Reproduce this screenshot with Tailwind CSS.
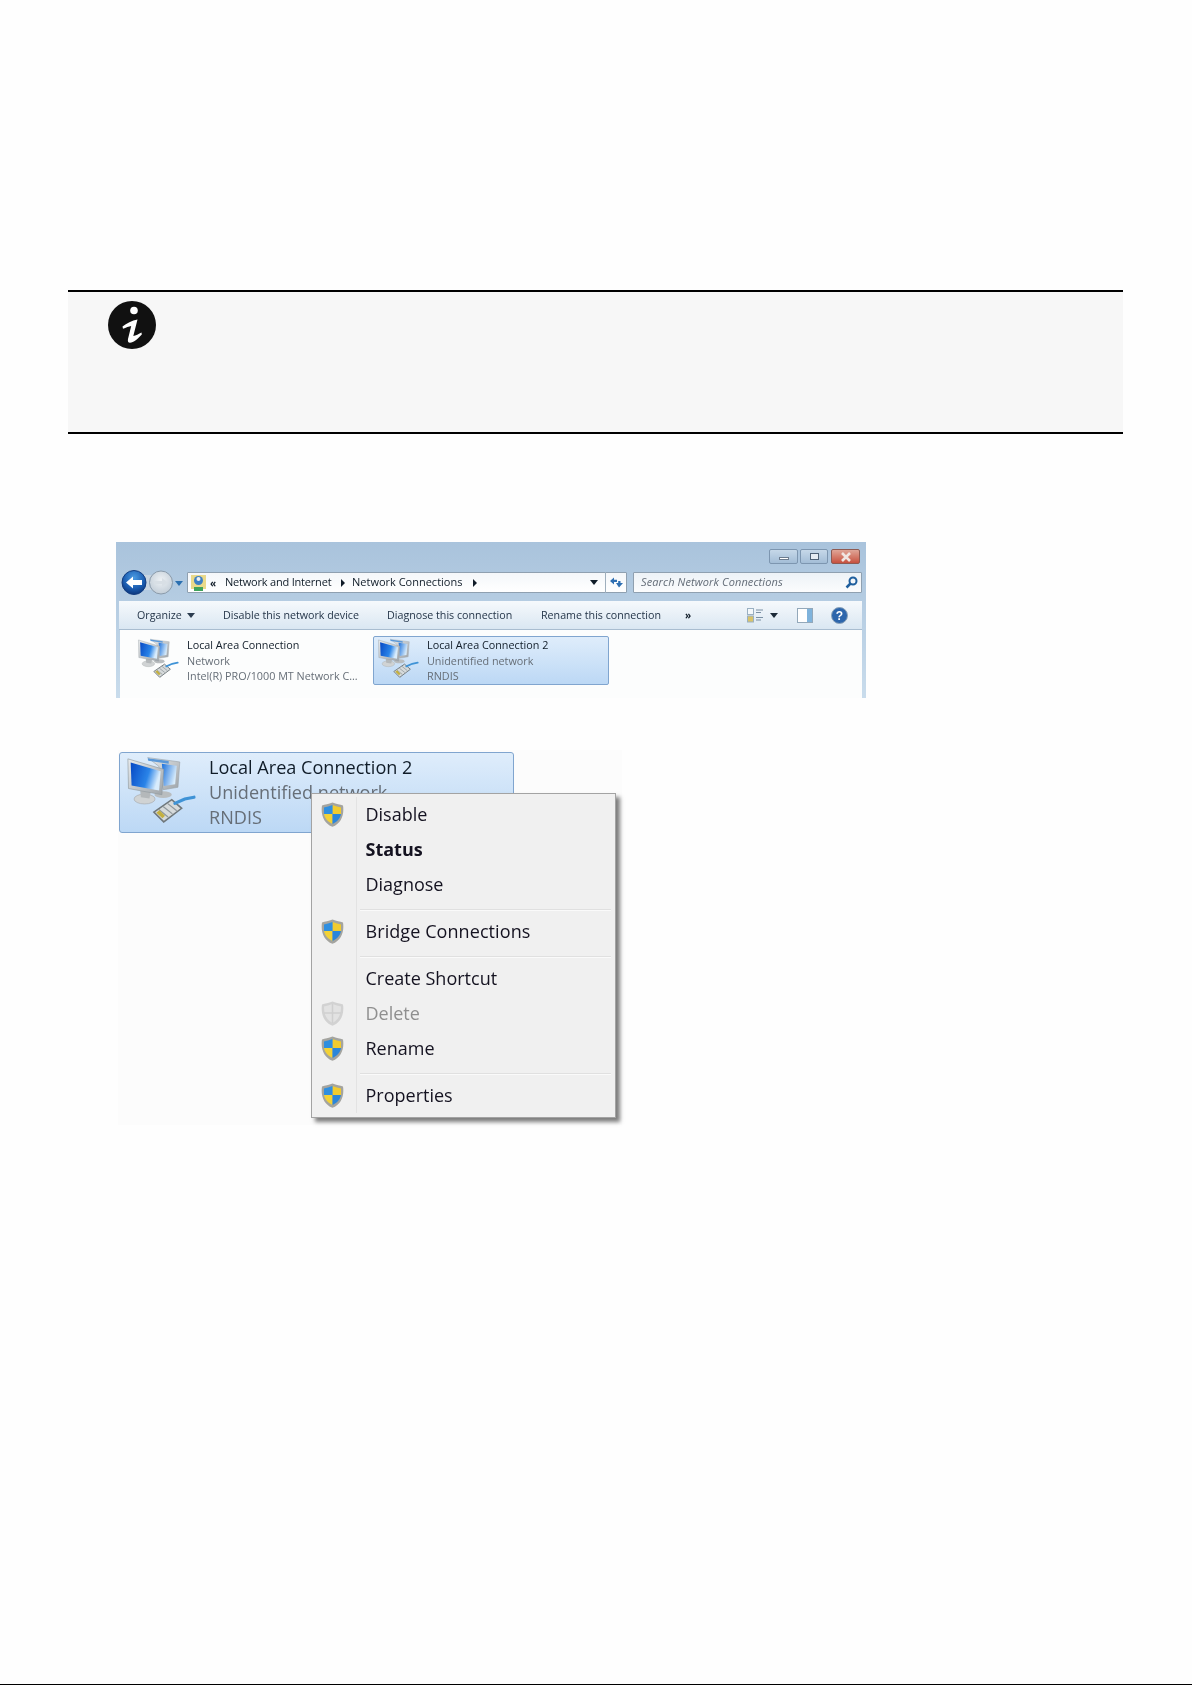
<!DOCTYPE html>
<html>
<head>
<meta charset="utf-8">
<script src="https://cdn.jsdelivr.net/npm/@tailwindcss/browser@4"></script>
</head>
<body class="bg-white">
<svg width="0" height="0" class="absolute">
  <defs>
    <linearGradient id="scr1" x1="0" y1="0" x2="1" y2="0.3"><stop offset="0" stop-color="#0648c4"/><stop offset="0.65" stop-color="#2a84e8"/><stop offset="1" stop-color="#d8ecfc"/></linearGradient>
    <linearGradient id="scr2" x1="0" y1="0" x2="1" y2="0.4"><stop offset="0" stop-color="#1a70dc"/><stop offset="1" stop-color="#d8ecfb"/></linearGradient>
    <linearGradient id="bez" x1="0" y1="0" x2="1" y2="1"><stop offset="0" stop-color="#e8ebed"/><stop offset="1" stop-color="#9ea4a9"/></linearGradient>
    <radialGradient id="backb" cx="0.5" cy="0.3" r="0.75"><stop offset="0" stop-color="#4b9be2"/><stop offset="0.6" stop-color="#1a5cb0"/><stop offset="1" stop-color="#0a2f72"/></radialGradient>
    <radialGradient id="fwdb" cx="0.5" cy="0.4" r="0.7"><stop offset="0" stop-color="#eef2f5"/><stop offset="1" stop-color="#bcc8d3"/></radialGradient>
    <symbol id="pc" viewBox="0 0 240 220">
      <ellipse cx="122" cy="122" rx="28" ry="11" fill="#b9bdbf"/>
      <path d="M72 2 L176 16 L170 98 L122 106 L108 30 Z" fill="url(#bez)" stroke="#9aa3a8" stroke-width="2"/>
      <path d="M118 22 L166 28 L161 88 L124 94 Z" fill="url(#scr2)"/>
      <path d="M72 4 L140 13 L140 22 L74 12 Z" fill="#5a98d8"/>
      <ellipse cx="62" cy="136" rx="34" ry="16" fill="#d0d3d4" stroke="#a4a8aa" stroke-width="2"/>
      <path d="M48 108 L82 112 L78 134 L50 130 Z" fill="#b4b8ba"/>
      <path d="M8 6 L124 40 L118 122 L10 102 Z" fill="url(#bez)" stroke="#8f989e" stroke-width="2"/>
      <path d="M17 18 L114 46 L109 108 L20 92 Z" fill="url(#scr1)"/>
      <path d="M92 178 L150 138 L182 166 L124 210 Z" fill="#d6dadb" stroke="#6f777b" stroke-width="5"/>
      <path d="M108 170 L138 194 M122 160 L152 184 M136 150 L166 174" stroke="#8f979b" stroke-width="4"/>
      <path d="M100 180 L120 198 L128 190 L110 172 Z" fill="#c4b040"/>
      <path d="M160 150 L192 136 L222 130" stroke="#3f93d6" stroke-width="10" fill="none" stroke-linecap="round"/>
    </symbol>
    <symbol id="shield" viewBox="0 0 23 25">
      <path d="M11.5 0.5 C15.5 2 19 2.5 22 3.5 C23.500 13 20 21.500 11.5 24.800 C3 21.500 -0.5 13 1 3.500 C4 2.500 7.500 2 11.5 0.5 Z" fill="#a4a49f"/>
      <path d="M11.5 3 C14.5 4.200 17.5 4.800 20 5.400 L20 12 L11.5 12 Z" fill="#f1cb2e"/>
      <path d="M11.5 3 C8.500 4.200 5.500 4.800 3 5.400 L3 12 L11.5 12 Z" fill="#2f8fe0"/>
      <path d="M3 12 L11.5 12 L11.5 22 C6.500 19.700 4 16.500 3 12 Z" fill="#f3d236"/>
      <path d="M20 12 L11.5 12 L11.5 22 C16.500 19.700 19 16.500 20 12 Z" fill="#2b86da"/>
    </symbol>
    <symbol id="shieldoff" viewBox="0 0 23 25">
      <path d="M11.5 0.5 C15.5 2 19 2.5 22 3.5 C23.500 13 20 21.500 11.5 24.800 C3 21.500 -0.5 13 1 3.500 C4 2.500 7.500 2 11.5 0.5 Z" fill="#d2d2d2"/>
      <path d="M11.5 3 C14.500 4.200 17.500 4.800 20 5.400 C20 13 18 18.500 11.5 22 C5 18.500 3 13 3 5.400 C5.500 4.800 8.500 4.200 11.5 3 Z" fill="#e2e2e2"/>
      <path d="M11.5 3 L11.5 22 M3 12 L20 12" stroke="#cfcfcf" stroke-width="1.500"/>
    </symbol>
  </defs>
</svg>

<div class="relative flex flex-col w-[1192px] h-[1685px] bg-[#fefefe] overflow-hidden font-['Open_Sans','Noto_Sans',sans-serif]">

  <!-- Note -->
  <div class="mt-[290px] ml-[68px] w-[1055px] h-[144px] bg-[#f7f7f7] border-y-[2px] border-black pl-[40px] pt-[9px] shrink-0">
    <svg width="48" height="48" viewBox="0 0 48 48">
      <circle cx="24" cy="24" r="24" fill="#111111"/>
      <circle cx="26" cy="9.500" r="3.800" fill="#ffffff"/>
      <path d="M14.500 25.500 C18.500 22.500 24 19.500 29.500 18.500 L25.300 35 C27.500 34.500 31 33 33.500 31.500 L33.800 33.500 C30 37.500 25.500 41.800 22 41.800 C20 41.800 19.600 40 20 38 L23.200 25 C21 25.500 18 26.500 15 27.800 Z" fill="#ffffff"/>
    </svg>
  </div>

  <!-- Explorer window -->
  <div class="mt-[108px] ml-[116px] w-[750px] h-[156px] shrink-0 flex flex-col bg-gradient-to-b from-[#a9c3dc] to-[#c9dcec] blur-[0.7px]">
    <div class="h-[30px] flex justify-end items-start pt-[7px] pr-[6px] shrink-0">
      <div class="w-[29px] h-[15px] rounded-[2px] border border-[#7d96b0] bg-gradient-to-b from-[#c6d8e9] to-[#a3bdd6] flex items-center justify-center"><div class="w-[10px] h-[3px] mt-[4px] bg-white border border-[#6b7b8e]"></div></div>
      <div class="w-[28px] h-[15px] ml-[2px] rounded-[2px] border border-[#7d96b0] bg-gradient-to-b from-[#c6d8e9] to-[#a3bdd6] flex items-center justify-center"><div class="w-[9px] h-[7px] border border-[#4f6277] bg-[#e6edf4]"></div></div>
      <div class="w-[29px] h-[15px] ml-[3px] rounded-[2px] border border-[#8e5a52] bg-gradient-to-b from-[#dfa597] to-[#c6503f] flex items-center justify-center">
        <svg width="12" height="10" viewBox="0 0 12 10"><path d="M2 1 L10 9 M10 1 L2 9" stroke="#f0e6e2" stroke-width="2.600"/></svg>
      </div>
    </div>

    <div class="h-[21px] flex shrink-0 text-[11px] text-[#101c28]">
      <svg class="w-[71px] h-[21px] shrink-0 overflow-visible" viewBox="0 0 71 21">
        <rect x="18" y="3" width="27" height="15" fill="#c9d5e0"/>
        <circle cx="18" cy="10.500" r="12" fill="url(#backb)" stroke="#123c80"/>
        <path d="M10 10.500 L17 4.500 L17 8 L26 8 L26 13 L17 13 L17 16.500 Z" fill="#ffffff"/>
        <circle cx="45" cy="10.500" r="11.500" fill="url(#fwdb)" stroke="#8a9bab"/>
        <path d="M52 10.500 L46 6 L46 9 L38 9 L38 12 L46 12 L46 15 Z" fill="#d8dfe5"/>
        <path d="M59 9 L67 9 L63 14 Z" fill="#2a6fb0"/>
      </svg>
      <div class="w-[440px] h-[21px] shrink-0 flex items-center bg-gradient-to-b from-[#f4f7fa] to-[#ffffff] border border-[#8fa0b0] rounded-[1px]">
        <svg class="ml-[2px] shrink-0" width="17" height="18" viewBox="0 0 17 18">
          <rect x="1" y="1" width="15" height="14" fill="#e9d98a"/>
          <circle cx="8.500" cy="6.500" r="4.500" fill="#3d7fc4"/>
          <circle cx="8.500" cy="5" r="2" fill="#f0f0f0"/>
          <rect x="4" y="13" width="9" height="4" fill="#3fa35c"/>
        </svg>
        <span class="ml-[3px] w-[15px] shrink-0 font-bold text-[10px] leading-none">«</span>
        <span class="w-[115px] shrink-0 whitespace-nowrap tracking-[-0.2px]">Network and Internet</span>
        <svg class="shrink-0" width="12" height="8" viewBox="0 0 12 8"><path d="M1 0 L5 4 L1 8 Z" fill="#101c28"/></svg>
        <span class="w-[120px] shrink-0 whitespace-nowrap">Network Connections</span>
        <svg class="shrink-0" width="10" height="8" viewBox="0 0 10 8"><path d="M1 0 L5 4 L1 8 Z" fill="#101c28"/></svg>
        <svg class="ml-[108px] shrink-0" width="8" height="5" viewBox="0 0 8 5"><path d="M0 0 L8 0 L4 5 Z" fill="#101c28"/></svg>
        <div class="ml-[7px] w-px h-[21px] bg-[#9fafbd] shrink-0"></div>
        <svg class="ml-[3px] shrink-0" width="15" height="13" viewBox="0 0 15 13">
          <path d="M1 5 L5 1.500 L5 3.800 L8 3.800 L8 6 L5 6 L5 8.500 Z" fill="#2f6fb2"/>
          <path d="M14 7 L10 11.500 L7 7 L9.200 7 L9.200 5 L11.500 5 L11.500 7 Z" fill="#2f6fb2"/>
        </svg>
      </div>
      <div class="ml-[6px] w-[229px] h-[21px] shrink-0 flex items-center justify-between pl-[7px] pr-[3px] bg-gradient-to-b from-[#edf2f7] to-[#fbfcfd] border border-[#8fa0b0] rounded-[1px]">
        <span class="italic text-[#636c77] whitespace-nowrap tracking-[0.12px]">Search Network Connections</span>
        <svg width="13" height="13" viewBox="0 0 13 13"><circle cx="8" cy="5" r="3.500" fill="none" stroke="#1f5f9e" stroke-width="2"/><path d="M5.500 7.500 L1.500 11.500" stroke="#1f5f9e" stroke-width="2.500"/></svg>
      </div>
    </div>

    <div class="mt-[8px] ml-[3px] mr-[4px] h-[29px] shrink-0 flex items-center border-b border-[#a9bdd0] bg-gradient-to-b from-[#f6f9fc] to-[#dae7f2] text-[10.700px] text-[#1f3044]">
      <span class="ml-[18px] w-[50px] shrink-0 whitespace-nowrap">Organize</span>
      <svg class="shrink-0" width="8" height="5" viewBox="0 0 8 5"><path d="M0 0 L8 0 L4 5 Z" fill="#2c3d50"/></svg>
      <span class="ml-[28px] w-[164px] shrink-0 whitespace-nowrap">Disable this network device</span>
      <span class="w-[154px] shrink-0 whitespace-nowrap">Diagnose this connection</span>
      <span class="w-[144px] shrink-0 whitespace-nowrap">Rename this connection</span>
      <span class="w-[62px] shrink-0 font-bold text-[10px] text-[#101c28]">»</span>
      <svg class="shrink-0" width="16" height="15" viewBox="0 0 16 15">
        <rect x="0.500" y="0.500" width="6" height="6" fill="#f4f8fb" stroke="#9ab0c2"/>
        <rect x="0.500" y="8" width="6" height="6" fill="#d8c36a" stroke="#9ab0c2"/>
        <path d="M9 2 L16 2 M9 4.500 L14 4.500 M9 9.500 L16 9.500 M9 12 L14 12" stroke="#7a90a4"/>
      </svg>
      <svg class="ml-[7px] shrink-0" width="8" height="5" viewBox="0 0 8 5"><path d="M0 0 L8 0 L4 5 Z" fill="#1c2a38"/></svg>
      <svg class="ml-[19px] shrink-0" width="16" height="15" viewBox="0 0 16 15">
        <rect x="0.500" y="0.500" width="15" height="14" fill="#ffffff" stroke="#93a8ba"/>
        <rect x="10" y="1" width="5" height="13" fill="#7fb3dc"/>
      </svg>
      <svg class="ml-[18px] shrink-0" width="17" height="17" viewBox="0 0 17 17">
        <circle cx="8.500" cy="8.500" r="8" fill="#2d66ac" stroke="#8ba2b8"/>
        <text x="8.500" y="13" text-anchor="middle" font-size="12" font-weight="700" fill="#ffffff" font-family="Liberation Sans">?</text>
      </svg>
    </div>

    <div class="flex-1 ml-[4px] mr-[4px] bg-[#fcfdfd] pt-[6px] flex items-start text-[10.800px] leading-[15.500px]">
      <div class="ml-[13px] w-[240px] h-[49px] pl-[4px] flex shrink-0">
        <svg class="w-[44px] h-[42px] mt-[2px] shrink-0"><use href="#pc"/></svg>
        <div class="ml-[6px] pt-[1px] whitespace-nowrap text-[#666e77]">
          <div class="text-[#101c28]">Local Area Connection</div>
          <div>Network</div>
          <div>Intel(R) PRO/1000 MT Network C...</div>
        </div>
      </div>
      <div class="w-[236px] h-[49px] pl-[3px] flex shrink-0 border border-[#80a5cf] rounded-[2px] bg-gradient-to-b from-[#dfedfb] to-[#bcd8f5]">
        <svg class="w-[44px] h-[42px] mt-[1px] shrink-0"><use href="#pc"/></svg>
        <div class="ml-[6px] whitespace-nowrap text-[#666e77]">
          <div class="text-[#101c28]">Local Area Connection 2</div>
          <div>Unidentified network</div>
          <div>RNDIS</div>
        </div>
      </div>
    </div>
  </div>

  <!-- Context menu crop -->
  <div class="relative mt-[52px] ml-[118px] w-[504px] h-[375px] shrink-0 bg-[#fcfcfc] blur-[0.7px] pt-[2px]">
    <div class="ml-px w-[395px] h-[81px] flex border border-[#80a5cf] rounded-[3px] bg-gradient-to-b from-[#dfedfb] to-[#bcd8f5] pl-[5px] text-[18.100px] leading-[25px]">
      <svg class="w-[75px] h-[68px] mt-[4px] shrink-0"><use href="#pc"/></svg>
      <div class="ml-[9px] pt-[2px] whitespace-nowrap text-[#666e77]">
        <div class="text-[#101c28]">Local Area Connection 2</div>
        <div>Unidentified network</div>
        <div>RNDIS</div>
      </div>
    </div>

    <div class="absolute left-[193px] top-[43px] w-[305px] h-[325px] bg-[#f0f0f0] border border-[#a3a3a3] shadow-[4px_4px_4px_rgba(0,0,0,0.5)] py-[3.250px] text-[18px] text-[#141220]">
      <div class="flex h-[35px] items-center"><div class="w-[45px] h-full border-r border-[#e3e3e3] pl-[9px] flex items-center shrink-0"><svg class="w-[23px] h-[25px] -mt-[1px]"><use href="#shield"/></svg></div><span class="pl-[8.500px]">Disable</span></div>
      <div class="flex h-[35px] items-center font-bold"><div class="w-[45px] h-full border-r border-[#e3e3e3] shrink-0"></div><span class="pl-[8.500px]">Status</span></div>
      <div class="flex h-[35px] items-center"><div class="w-[45px] h-full border-r border-[#e3e3e3] shrink-0"></div><span class="pl-[8.500px]">Diagnose</span></div>
      <div class="flex h-[12px]"><div class="w-[45px] h-full border-r border-[#e3e3e3] shrink-0"></div><div class="ml-[3px] mr-[4px] mt-[7px] flex-1 h-[2px] bg-[#e0e0e0] border-b border-[#fafafa]"></div></div>
      <div class="flex h-[35px] items-center"><div class="w-[45px] h-full border-r border-[#e3e3e3] pl-[9px] flex items-center shrink-0"><svg class="w-[23px] h-[25px] -mt-[1px]"><use href="#shield"/></svg></div><span class="pl-[8.500px] tracking-[0.08px]">Bridge Connections</span></div>
      <div class="flex h-[12px]"><div class="w-[45px] h-full border-r border-[#e3e3e3] shrink-0"></div><div class="ml-[3px] mr-[4px] mt-[7px] flex-1 h-[2px] bg-[#e0e0e0] border-b border-[#fafafa]"></div></div>
      <div class="flex h-[35px] items-center"><div class="w-[45px] h-full border-r border-[#e3e3e3] shrink-0"></div><span class="pl-[8.500px]">Create Shortcut</span></div>
      <div class="flex h-[35px] items-center text-[#8f8f8f]"><div class="w-[45px] h-full border-r border-[#e3e3e3] pl-[9px] flex items-center shrink-0"><svg class="w-[23px] h-[25px] -mt-[1px]"><use href="#shieldoff"/></svg></div><span class="pl-[8.500px]">Delete</span></div>
      <div class="flex h-[35px] items-center"><div class="w-[45px] h-full border-r border-[#e3e3e3] pl-[9px] flex items-center shrink-0"><svg class="w-[23px] h-[25px] -mt-[1px]"><use href="#shield"/></svg></div><span class="pl-[8.500px]">Rename</span></div>
      <div class="flex h-[12px]"><div class="w-[45px] h-full border-r border-[#e3e3e3] shrink-0"></div><div class="ml-[3px] mr-[4px] mt-[7px] flex-1 h-[2px] bg-[#e0e0e0] border-b border-[#fafafa]"></div></div>
      <div class="flex h-[35px] items-center"><div class="w-[45px] h-full border-r border-[#e3e3e3] pl-[9px] flex items-center shrink-0"><svg class="w-[23px] h-[25px] -mt-[1px]"><use href="#shield"/></svg></div><span class="pl-[8.500px]">Properties</span></div>
    </div>
  </div>

  <div class="mt-auto h-px bg-black shrink-0"></div>
</div>
</body>
</html>
